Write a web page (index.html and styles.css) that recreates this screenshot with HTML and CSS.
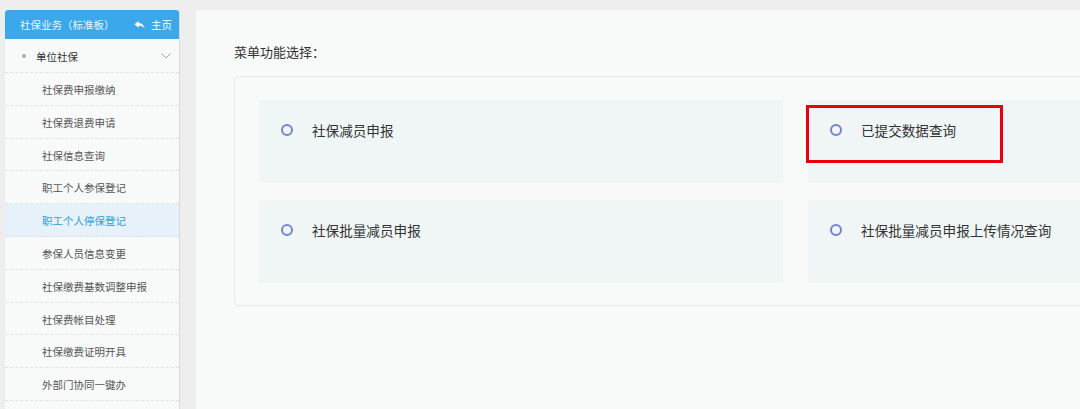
FILE: index.html
```html
<!DOCTYPE html>
<html lang="zh-CN">
<head>
<meta charset="utf-8">
<title>社保业务</title>
<link rel="stylesheet" href="styles.css">
</head>
<body>
<div class="layout">
  <aside class="sidebar">
    <div class="side-head">
      <span class="side-title">社保业务（标准板）</span>
      <span class="home">
        <svg class="reply" viewBox="0 0 12 10" width="11" height="10"><path d="M5 0.5 L0.5 4.3 L5 8 L5 5.8 C8 5.6 10 6.5 11.6 9 C11.2 5.3 9 3 5 2.8 Z" fill="#fff"/></svg>
        主页
      </span>
    </div>
    <div class="group">
      <span class="dot"></span>
      <span class="group-name">单位社保</span>
      <svg class="chev" viewBox="0 0 10 6" width="10" height="6"><path d="M0.5 0.5 L5 5 L9.5 0.5" fill="none" stroke="#9aa3a8" stroke-width="1"/></svg>
    </div>
    <ul class="menu">
      <li class="item">社保费申报缴纳</li>
      <li class="item">社保费退费申请</li>
      <li class="item">社保信息查询</li>
      <li class="item">职工个人参保登记</li>
      <li class="item active">职工个人停保登记</li>
      <li class="item">参保人员信息变更</li>
      <li class="item">社保缴费基数调整申报</li>
      <li class="item">社保费帐目处理</li>
      <li class="item">社保缴费证明开具</li>
      <li class="item">外部门协同一键办</li>
      <li class="item"></li>
    </ul>
  </aside>
  <main class="main">
    <div class="title">菜单功能选择：</div>
    <div class="box">
      <div class="grid">
        <div class="card"><span class="radio"></span><span class="label">社保减员申报</span></div>
        <div class="card"><span class="radio"></span><span class="label">已提交数据查询</span><span class="mark"></span></div>
        <div class="card"><span class="radio"></span><span class="label">社保批量减员申报</span></div>
        <div class="card"><span class="radio"></span><span class="label">社保批量减员申报上传情况查询</span></div>
      </div>
    </div>
  </main>
</div>
</body>
</html>
```
FILE: styles.css
```css
html, body {
  margin: 0;
  padding: 0;
  background: #eeeeee;
  overflow: hidden;
  font-family: "Noto Sans CJK SC", "Noto Sans", sans-serif;
}
.layout {
  display: flex;
  align-items: flex-start;
  gap: 16px;
  padding: 10px 0 0 5px;
  width: 1500px;
  height: 420px;
}
.sidebar {
  width: 174px;
  flex: none;
  background: #f8fafa;
  border-right: 1px solid #dadada;
  height: 410px;
}
.side-head {
  height: 29px;
  background: #3ba8ec;
  border-radius: 3px 3px 0 0;
  display: flex;
  align-items: center;
  justify-content: space-between;
  padding: 0 7px 0 15px;
  color: #fff;
  font-size: 10.5px;
}
.side-title { color: #eef7ff; }
.home { display: flex; align-items: center; gap: 6px; }
.reply { display: block; }
.group {
  height: 34px;
  box-sizing: border-box;
  border-bottom: 1px dashed #dde2e2;
  display: flex;
  align-items: center;
  padding: 1px 8px 0 17px;
  font-size: 10.5px;
  color: #333;
}
.dot {
  width: 4px;
  height: 4px;
  border-radius: 50%;
  background: #a6adb2;
  margin-right: 10px;
}
.group-name { flex: 1; }
.chev { display: block; }
.menu {
  list-style: none;
  margin: 0;
  padding: 0;
}
.item {
  height: 32.8px;
  box-sizing: border-box;
  padding-top: 3px;
  line-height: 28px;
  border-bottom: 1px dashed #dde2e2;
  padding-left: 37px;
  font-size: 10.5px;
  color: #555;
}
.item.active {
  background: #e6f1fa;
  color: #2a9fd8;
}
.main {
  flex: none;
  width: 1250px;
  height: 420px;
  background: #f8fafa;
  padding: 33px 0 0 38px;
  box-sizing: border-box;
}
.title {
  font-size: 13px;
  color: #333;
  line-height: 18px;
  margin-bottom: 15px;
}
.box {
  width: 1123px;
  border: 1px solid #e4e9e9;
  border-radius: 4px;
  background: #f8fafa;
  padding: 23px 24px 22px;
  box-sizing: border-box;
}
.grid {
  display: grid;
  grid-template-columns: 524px 524px;
  column-gap: 25px;
  row-gap: 17px;
}
.card {
  position: relative;
  height: 83px;
  background: #f0f5f6;
  display: flex;
  align-items: flex-start;
  padding: 21px 0 0 22px;
  box-sizing: border-box;
}
.radio {
  width: 8px;
  height: 8px;
  border: 2px solid #7384d6;
  border-radius: 50%;
  margin-top: 3px;
  margin-right: 19px;
  flex: none;
}
.label {
  font-size: 13.6px;
  line-height: 18px;
  color: #333;
}
.mark {
  position: absolute;
  left: -2px;
  top: 5px;
  width: 197px;
  height: 58px;
  border: 3px solid #e8000b;
  box-sizing: border-box;
}
```
